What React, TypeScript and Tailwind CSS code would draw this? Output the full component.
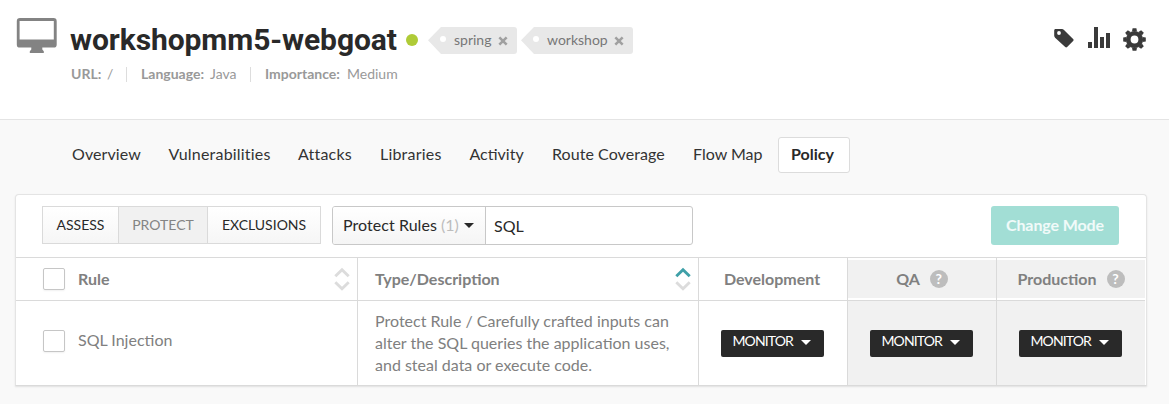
import React from "react";

function MonitorIcon() {
  return (
    <svg className="ml-4 mt-[18px] h-[35px] w-[41px] shrink-0" viewBox="0 0 41 35">
      <path
        fill="#838383"
        fillRule="evenodd"
        d="M4 0h33.5a3.2 3.2 0 0 1 3.2 3.2v23.2a3.2 3.2 0 0 1-3.2 3.2H26.3v1.8l1.5 1.8V35H13.8v-1.8l1.5-1.8v-1.8H4a3.2 3.2 0 0 1-3.2-3.2V3.2A3.2 3.2 0 0 1 4 0zM3.6 3v18.4h34.2V3z"
      />
    </svg>
  );
}

function Tag({ label, width }: { label: string; width: string }) {
  return (
    <span className={`relative flex h-[27px] items-center ${width}`}>
      <svg className="h-[27px] w-[14px] shrink-0" viewBox="0 0 14 27">
        <path fill="#e8e8e8" d="M14 0h-1L0 13.2 13 27h1z" />
      </svg>
      <span className="flex h-full grow items-center rounded-r-[3px] bg-[#e8e8e8] pl-3 pr-[9px] pb-[2px] text-[14px] text-[#777]">
        <span className="grow">{label}</span>
        <svg className="mt-[3px] h-[10px] w-[10px]" viewBox="0 0 9 9">
          <path d="M1.2 1.2l6.6 6.6M7.8 1.2L1.2 7.8" stroke="#a0a0a0" strokeWidth="2.3" />
        </svg>
      </span>
      <span className="absolute left-[12px] top-[9px] h-[6px] w-[6px] rounded-full bg-white" />
    </span>
  );
}

function HeaderActions() {
  return (
    <div className="mt-[27px] flex h-6">
      <svg className="h-6 w-[20px]" viewBox="0 0 20 24">
        <path
          fill="#3a3a3a"
          fillRule="evenodd"
          d="M1.7 2h6.2c.8 0 1.5.3 2.1.9l9.1 9c.7.7.7 1.3 0 2l-6 6.2c-.6.6-1.2.6-1.9 0L1.1 10.7C.4 10 .2 9.400 .2 8.600V3.500C.2 2.500.7 2 1.7 2zM5 4.100a1.900 1.900 0 1 0 0 3.800 1.900 1.900 0 0 0 0-3.800z"
        />
      </svg>
      <svg className="ml-[14px] h-6 w-[22px]" viewBox="0 0 22 24">
        <path fill="#3a3a3a" d="M0 15h4v6H0zM6 0h4v21H6zM12 10h4v11h-4zM18 6h4v15h-4z" />
      </svg>
      <svg className="ml-[13px] mt-[1px] h-[23px] w-[23px]" viewBox="-11.5 -11.5 23 23">
        <g fill="#3a3a3a">
          <path
            fillRule="evenodd"
            d="M0-8.600a8.600 8.600 0 1 0 0 17.200a8.600 8.600 0 1 0 0-17.200zM0-3.900a3.900 3.900 0 1 1 0 7.800a3.900 3.900 0 1 1 0-7.800z"
          />
          {[0, 45, 90, 135, 180, 225, 270, 315].map((a) => (
            <path key={a} transform={`rotate(${a})`} d="M-2.500-8L-1.900-11.300H1.900L2.500-8z" />
          ))}
        </g>
      </svg>
    </div>
  );
}

function Caret({ className }: { className: string }) {
  return (
    <svg className={className} viewBox="0 0 10 5">
      <path fill="currentColor" d="M0 0h10L5 5z" />
    </svg>
  );
}

function Sort({ active = false }: { active?: boolean }) {
  return (
    <svg className="mr-[7px] h-[24px] w-[16px]" viewBox="0 0 16 24">
      <path
        d="M1.300 9.200L8 2.700l6.700 6.500"
        fill="none"
        stroke={active ? "#3fa0a8" : "#dcdcdc"}
        strokeWidth="2.900"
      />
      <path d="M1.300 15.200L8 21.700l6.700-6.500" fill="none" stroke="#dcdcdc" strokeWidth="2.900" />
    </svg>
  );
}

function Help() {
  return (
    <span className="flex h-[18px] w-[18px] items-center justify-center rounded-full bg-[#bdbdbd] text-[14px] font-bold leading-none text-white">
      ?
    </span>
  );
}

function Checkbox() {
  return (
    <span className="h-[22px] w-[22px] shrink-0 rounded-[2px] border border-[#c6c6c6] bg-white shadow-[0_1px_2px_rgba(0,0,0,0.06)]" />
  );
}

function Mode() {
  return (
    <button className="mr-[2px] flex h-[27px] w-[103px] items-center rounded-[2px] bg-[#292929] pl-3 pb-[4px] text-[14px] leading-[20px] text-white">
      <span className="w-[68px] text-left tracking-[-0.9px]">MONITOR</span>
      <Caret className="mt-[3px] h-[5px] w-[10px]" />
    </button>
  );
}

const tabs = [
  { label: "Overview", width: "w-[96.500px] tracking-[0.1px]" },
  { label: "Vulnerabilities", width: "w-[129.500px] tracking-[0.2px]" },
  { label: "Attacks", width: "w-[82px] tracking-[0.2px]" },
  { label: "Libraries", width: "w-[89.500px] tracking-[0.2px]" },
  { label: "Activity", width: "w-[82.500px]" },
  { label: "Route Coverage", width: "w-[141px] tracking-[0.06px]" },
  { label: "Flow Map", width: "w-[85px]" },
];

export default function App() {
  return (
    <div className="h-[404px] w-[1169px] overflow-hidden bg-[#f9f9f9] font-['Lato',sans-serif] text-[16px] text-[#333]">
      <header className="flex h-[120px] border-b border-[#e4e4e4] bg-white">
        <MonitorIcon />
        <div className="ml-[13px] w-[984px] pt-[21px]">
          <div className="flex h-[38px] items-center">
            <h1 className="w-[336px] whitespace-nowrap font-['Roboto',sans-serif] text-[30px] font-bold leading-[38px] tracking-[-0.08px] text-[#292929]">
              workshopmm5-webgoat
            </h1>
            <span className="h-3 w-3 rounded-full bg-[#afcb37]" />
            <div className="ml-[10px] flex gap-1">
              <Tag label="spring" width="w-[89px]" />
              <Tag label="workshop" width="w-[112px]" />
            </div>
          </div>
          <div className="ml-[1px] mt-[4px] flex h-5 items-center whitespace-nowrap text-[14px] text-[#999]">
            <b className="w-9">URL:</b>
            <span className="w-[19px]">/</span>
            <span className="mt-[2px] h-[15px] w-px bg-[#ddd]" />
            <b className="ml-[14px] w-[69px]">Language:</b>
            <span className="w-10">Java</span>
            <span className="mt-[2px] h-[15px] w-px bg-[#ddd]" />
            <b className="ml-[14px] w-[82px]">Importance:</b>
            <span>Medium</span>
          </div>
        </div>
        <HeaderActions />
      </header>

      <nav className="flex h-[74px] items-center pb-[4px] pl-[72px]">
        {tabs.map((t) => (
          <a key={t.label} className={`whitespace-nowrap pb-[2px] ${t.width}`}>
            {t.label}
          </a>
        ))}
        <a className="flex h-9 w-[72px] items-center justify-center rounded-[3px] border border-[#dcdcdc] bg-white pb-[2px] pr-[3px] font-bold text-[#292929]">
          Policy
        </a>
      </nav>

      <main className="ml-[15px] h-[192px] w-[1132px] rounded-t-[4px] border border-[#e4e4e4] border-b-[#dadada] bg-white shadow-[0_1px_2px_rgba(0,0,0,0.10)]">
        <div className="flex h-[63px] border-b border-[#dadada] pl-[26px] pt-[11px]">
          <div className="flex h-[38px] w-[279px] border border-[#dadada] bg-linear-to-b from-white to-[#f6f6f6] text-[14px] text-[#292929]">
            <button className="w-[75px] pb-[2px]">ASSESS</button>
            <button className="w-[90px] border-x border-[#dadada] bg-[#f1f1f1] pb-[2px] text-[#848484]">PROTECT</button>
            <button className="grow pb-[2px]">EXCLUSIONS</button>
          </div>
          <div className="ml-[11px] flex h-[39px] w-[361px] rounded-[3px] border border-[#c8c8c8] text-[#292929]">
            <button className="flex w-[153px] items-center whitespace-nowrap rounded-l-[2px] border-r border-[#c8c8c8] bg-linear-to-b from-white to-[#f5f5f5] pb-[2px] pl-[10px]">
              <span className="w-[98px] text-left tracking-[0.05px]">Protect Rules</span>
              <span className="w-[23px] text-left text-[#bdbdbd]">(1)</span>
              <Caret className="mt-[1px] h-[5px] w-[10px]" />
            </button>
            <div className="flex items-center pl-2">SQL</div>
          </div>
          <button className="ml-[298px] h-[39px] w-[128px] rounded-[3px] bg-[#a2ded5] pb-[2px] font-bold tracking-[-0.1px] text-white/85">
            Change Mode
          </button>
        </div>

        <div className="grid h-[127px] w-[1129px] grid-cols-[342px_341px_149px_149px_148px] grid-rows-[43px_84px] text-[#808080]">
          <div className="flex items-center border-b border-r border-[#dadada] pl-[27px] pb-[1px] font-bold">
            <Checkbox />
            <span className="ml-[13px] grow">Rule</span>
            <Sort />
          </div>
          <div className="flex items-center border-b border-r border-[#dadada] pl-[17px] pb-[1px] font-bold">
            <span className="grow">Type/Description</span>
            <Sort active />
          </div>
          <div className="flex items-center justify-center border-b border-r border-[#dadada] pr-[2px] pb-[1px] font-bold">
            Development
          </div>
          <div className="border-b border-r border-[#dadada] pb-[2px] pt-[2px]">
            <div className="flex h-full items-center justify-center gap-[10px] bg-[#f1f1f1] font-bold">
              QA
              <Help />
            </div>
          </div>
          <div className="border-b border-[#dadada] pb-[2px] pt-[2px]">
            <div className="flex h-full items-center justify-center gap-[10px] bg-[#f1f1f1] font-bold">
              Production
              <Help />
            </div>
          </div>

          <div className="flex items-center border-r border-[#dadada] pl-[27px] pb-[4px]">
            <Checkbox />
            <span className="ml-[13px] pb-[2px]">SQL Injection</span>
          </div>
          <div className="whitespace-nowrap border-r border-[#dadada] pl-[17px] pt-[9px] leading-[22px]">
            <p>Protect Rule / Carefully crafted inputs can</p>
            <p>alter the SQL queries the application uses,</p>
            <p>and steal data or execute code.</p>
          </div>
          <div className="flex items-center justify-center border-r border-[#dadada]">
            <Mode />
          </div>
          <div className="flex items-center justify-center border-r border-[#dadada] bg-[#f1f1f1]">
            <Mode />
          </div>
          <div className="flex items-center justify-center bg-[#f1f1f1]">
            <Mode />
          </div>
        </div>
      </main>
    </div>
  );
}
